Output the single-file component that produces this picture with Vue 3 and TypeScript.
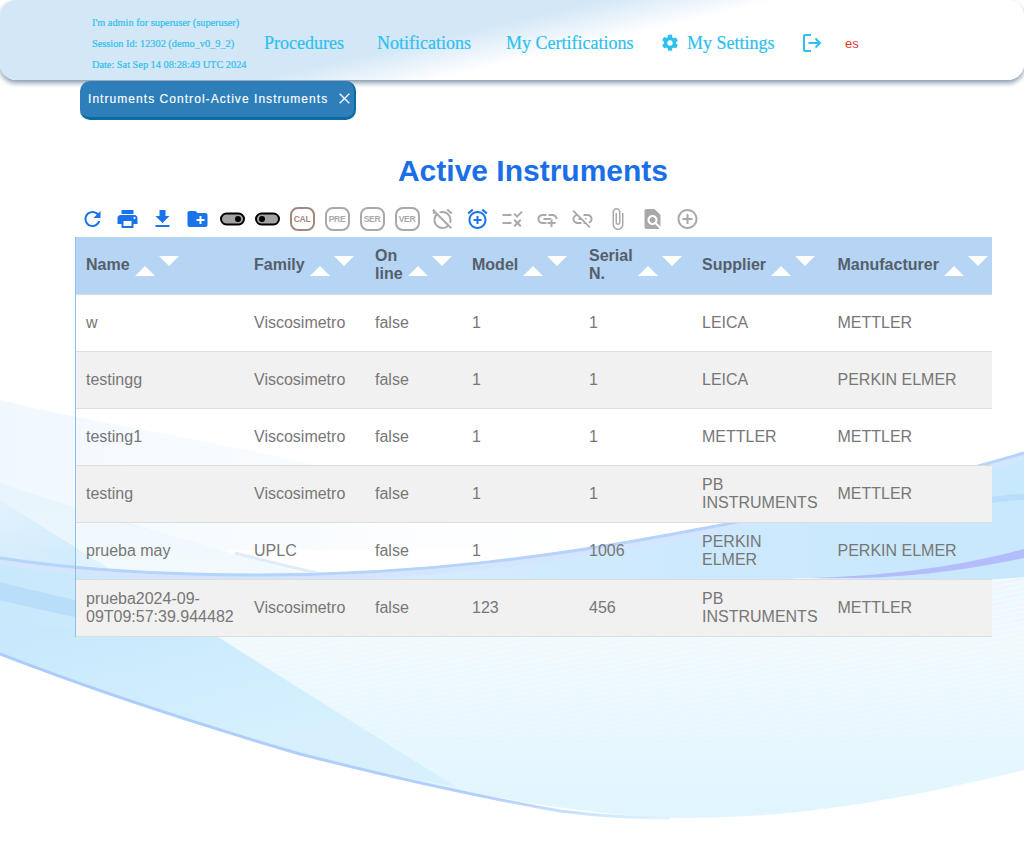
<script setup lang="ts">
interface Icon { d: string; c: string }
const ic = { blue: '#1a73e8', grey: '#a9a9a9' }
const before: Icon[] = [
  { c: ic.blue, d: 'M17.65 6.35C16.2 4.9 14.21 4 12 4c-4.42 0-7.99 3.58-7.99 8s3.57 8 7.99 8c3.73 0 6.84-2.55 7.73-6h-2.08c-.82 2.33-3.04 4-5.65 4-3.31 0-6-2.69-6-6s2.69-6 6-6c1.66 0 3.14.69 4.22 1.78L13 11h7V4l-2.35 2.35z' },
  { c: ic.blue, d: 'M19 8H5c-1.66 0-3 1.34-3 3v6h4v4h12v-4h4v-6c0-1.66-1.34-3-3-3zm-3 11H8v-5h8v5zm3-7c-.55 0-1-.45-1-1s.45-1 1-1 1 .45 1 1-.45 1-1 1zm-1-9H6v4h12V3z' },
  { c: ic.blue, d: 'M19 9h-4V3H9v6H5l7 7 7-7zM5 18v2h14v-2H5z' },
  { c: ic.blue, d: 'M20 6h-8l-2-2H4c-1.11 0-1.99.89-1.99 2L2 18c0 1.11.89 2 2 2h16c1.11 0 2-.89 2-2V8c0-1.11-.89-2-2-2zm-1 8h-3v3h-2v-3h-3v-2h3V9h2v3h3v2z' }
]
const badges = [
  { t: 'CAL', c: '#a1887f' }, { t: 'PRE', c: '#a9a9a9' }, { t: 'SER', c: '#a9a9a9' }, { t: 'VER', c: '#a9a9a9' }
]
const after: Icon[] = [
  { c: ic.grey, d: 'M10.04 6.29C10.66 6.11 11.32 6 12 6c3.86 0 7 3.14 7 7 0 .68-.11 1.34-.29 1.96l1.56 1.56c.47-1.08.73-2.27.73-3.52 0-4.97-4.03-9-9-9-1.25 0-2.44.26-3.53.72l1.57 1.57zM17.34 1.81l4.6 3.85-1.28 1.53-4.61-3.84zM3.02 2.1L1.61 3.51l1.37 1.37-.92.77 1.28 1.54 1.06-.89.8.8C3.83 8.69 3 10.75 3 13c0 4.97 4.03 9 9 9 2.25 0 4.31-.83 5.89-2.2l2.1 2.1 1.41-1.41L3.02 2.1zM12 20c-3.86 0-7-3.14-7-7 0-1.7.61-3.26 1.62-4.47l9.85 9.85C15.26 19.39 13.7 20 12 20z' },
  { c: ic.blue, d: 'M7.88 3.39L6.6 1.86 2 5.71l1.29 1.53 4.59-3.85zM22 5.72l-4.6-3.86-1.29 1.53 4.6 3.86L22 5.72zM12 4c-4.97 0-9 4.03-9 9s4.02 9 9 9c4.97 0 9-4.03 9-9s-4.03-9-9-9zm0 16c-3.87 0-7-3.13-7-7s3.13-7 7-7 7 3.13 7 7-3.13 7-7 7zm1-11h-2v3H8v2h3v3h2v-3h3v-2h-3V9z' },
  { c: ic.grey, d: 'M16.54 11L13 7.46l1.41-1.41 2.12 2.12 4.24-4.24 1.41 1.41L16.54 11zM11 7H2v2h9V7zm10 6.41L19.59 12 17 14.59 14.41 12 13 13.41 15.59 16 13 18.59 14.41 20 17 17.41 19.59 20 21 18.59 18.41 16 21 13.41zM11 15H2v2h9v-2z' },
  { c: ic.grey, d: 'M8 11h8v2H8zm12.1 1H22c0-2.76-2.24-5-5-5h-4v1.9h4c1.71 0 3.1 1.39 3.1 3.1zM3.9 12c0-1.71 1.39-3.1 3.1-3.1h4V7H7c-2.76 0-5 2.24-5 5s2.24 5 5 5h4v-1.9H7c-1.71 0-3.1-1.39-3.1-3.1zM17 12h-2v3h-3v2h3v3h2v-3h3v-2h-3z' },
  { c: ic.grey, d: 'M17 7h-4v1.9h4c1.71 0 3.1 1.39 3.1 3.1 0 1.43-.98 2.63-2.31 2.98l1.46 1.46C20.88 15.61 22 13.95 22 12c0-2.76-2.24-5-5-5zm-1 4h-2.19l2 2H16zM2 4.27l3.11 3.11C3.29 8.12 2 9.91 2 12c0 2.76 2.24 5 5 5h4v-1.9H7c-1.71 0-3.1-1.39-3.1-3.1 0-1.59 1.21-2.9 2.76-3.07L8.73 11H8v2h2.73L13 15.27V17h1.73l4.01 4L20 19.74 3.27 3 2 4.27z' },
  { c: ic.grey, d: 'M16.5 6v11.5c0 2.21-1.79 4-4 4s-4-1.79-4-4V5c0-1.38 1.12-2.5 2.5-2.5s2.5 1.12 2.5 2.5v10.5c0 .55-.45 1-1 1s-1-.45-1-1V6H10v9.5c0 1.38 1.12 2.5 2.5 2.5s2.5-1.12 2.5-2.5V5c0-2.21-1.79-4-4-4S7 2.79 7 5v12.5c0 3.04 2.46 5.5 5.5 5.5s5.5-2.46 5.5-5.5V6h-1.5z' },
  { c: ic.grey, d: 'M20 19.59V8l-6-6H6c-1.1 0-1.99.9-1.99 2L4 20c0 1.1.89 2 1.99 2H18c.45 0 .85-.15 1.19-.4l-4.43-4.43c-.8.52-1.74.83-2.76.83-2.76 0-5-2.24-5-5s2.24-5 5-5 5 2.24 5 5c0 1.02-.31 1.96-.83 2.75L20 19.59zM9 13c0 1.66 1.34 3 3 3s3-1.34 3-3-1.34-3-3-3-3 1.34-3 3z' },
  { c: ic.grey, d: 'M13 7h-2v4H7v2h4v4h2v-4h4v-2h-4V7zm-1-5C6.48 2 2 6.48 2 12s4.48 10 10 10 10-4.48 10-10S17.52 2 12 2zm0 18c-4.41 0-8-3.59-8-8s3.59-8 8-8 8 3.59 8 8-3.59 8-8 8z' }
]
const cols = ['Name', 'Family', 'On line', 'Model', 'Serial N.', 'Supplier', 'Manufacturer']
const rows = [
  ['w', 'Viscosimetro', 'false', '1', '1', 'LEICA', 'METTLER'],
  ['testingg', 'Viscosimetro', 'false', '1', '1', 'LEICA', 'PERKIN ELMER'],
  ['testing1', 'Viscosimetro', 'false', '1', '1', 'METTLER', 'METTLER'],
  ['testing', 'Viscosimetro', 'false', '1', '1', 'PB INSTRUMENTS', 'METTLER'],
  ['prueba may', 'UPLC', 'false', '1', '1006', 'PERKIN ELMER', 'PERKIN ELMER'],
  ['prueba2024-09-09T09:57:39.944482', 'Viscosimetro', 'false', '123', '456', 'PB INSTRUMENTS', 'METTLER']
]
</script>

<template>
  <div class="page">
    <svg class="wave" viewBox="0 0 1024 848" aria-hidden="true">
      <defs>
        <linearGradient id="pale" x1="0" y1="0" x2="1" y2="0">
          <stop offset="0" stop-color="#f0f8fe" />
          <stop offset="1" stop-color="#f8fcff" stop-opacity="0" />
        </linearGradient>
        <linearGradient id="main" gradientUnits="userSpaceOnUse" x1="0" y1="480" x2="0" y2="820">
          <stop offset="0" stop-color="#e8f4fd" />
          <stop offset=".5" stop-color="#eff9fe" />
          <stop offset="1" stop-color="#e0f5fe" />
        </linearGradient>
        <linearGradient id="wedge" gradientUnits="userSpaceOnUse" x1="0" y1="500" x2="80" y2="790">
          <stop offset="0" stop-color="#e3f2fd" />
          <stop offset=".4" stop-color="#c6e8fc" />
          <stop offset="1" stop-color="#d6f0fe" />
        </linearGradient>
        <linearGradient id="band" gradientUnits="userSpaceOnUse" x1="0" y1="0" x2="1024" y2="0">
          <stop offset="0" stop-color="#c8e8fc" />
          <stop offset=".3" stop-color="#d6edfd" />
          <stop offset=".7" stop-color="#cde9fd" />
          <stop offset="1" stop-color="#c8e8fd" />
        </linearGradient>
        <linearGradient id="edge" gradientUnits="userSpaceOnUse" x1="0" y1="0" x2="670" y2="0">
          <stop offset="0" stop-color="#adcbfb" />
          <stop offset=".72" stop-color="#b3cffc" />
          <stop offset="1" stop-color="#e0f5fe" />
        </linearGradient>
        <pattern id="hatch" patternUnits="userSpaceOnUse" width="40" height="5" patternTransform="rotate(-11)">
          <rect width="40" height="1.300" fill="#fff" opacity=".55" />
        </pattern>
        <linearGradient id="fadeHatch" x1="0" y1="0" x2="0" y2="1">
          <stop offset="0" stop-color="#fff" />
          <stop offset=".7" stop-color="#fff" stop-opacity=".3" />
          <stop offset="1" stop-color="#fff" stop-opacity="0" />
        </linearGradient>
        <mask id="hm" maskUnits="userSpaceOnUse" x="0" y="570" width="1024" height="260">
          <rect x="0" y="570" width="1024" height="260" fill="url(#fadeHatch)" />
        </mask>
      </defs>
      <path fill="url(#pale)" d="M0 400C100 425 250 445 420 490L640 545V550H0Z" />
      <path fill="url(#main)" d="M0 483C80 510 200 545 300 572L1024 577V770C900 800 800 818 680 818C560 815 430 785 300 755C180 720 90 690 0 655Z" />
      <path fill="url(#hatch)" mask="url(#hm)" d="M200 640L1024 577V770C900 800 800 818 680 818C560 815 430 785 300 755Z" />
      <path fill="url(#wedge)" d="M0 500L456 787C400 776 350 767 300 755C180 720 90 690 0 655Z" />
      <path fill="url(#band)" d="M0 557C70 568 150 574 260 574C420 574 560 555 700 528C800 510 930 480 1024 452V577C940 584 880 578 800 578L300 620L0 630Z" />
      <path fill="#ffffff" opacity=".35" d="M75 510L300 572L240 574C170 574 120 572 75 566Z" />
      <path fill="none" stroke="#dfecfd" stroke-width="3" d="M235 553C270 562 310 572 345 579" />
      <path fill="#b8def9" d="M0 582C30 590 60 596 75 600V617C50 612 20 605 0 600Z" />
      <path fill="none" stroke="#d3e6fd" stroke-width="8" d="M0 561C70 572 150 578 260 578C420 578 560 559 700 532C800 514 930 484 1024 456" />
      <path fill="none" stroke="#b5d3fb" stroke-width="3" d="M0 558C70 569 150 575 260 575C420 575 560 556 700 529C800 511 930 481 1024 453" />
      <path fill="#b9defb" d="M992 497C1005 495 1015 494 1024 494V500C1015 500 1005 501 992 503Z" />
      <path fill="#b3bdfb" d="M810 578C880 576 950 569 1024 549V558C950 574 880 580 810 578Z" />
      <path fill="none" stroke="url(#edge)" stroke-width="3" d="M0 654C90 689 180 719 300 754C390 777 470 795 560 811C600 816 640 818 670 818" />
    </svg>

    <header class="top">
      <div class="session">
        <span>I'm admin for superuser (superuser)</span>
        <span>Session Id: 12302 (demo_v0_9_2)</span>
        <span>Date: Sat Sep 14 08:28:49 UTC 2024</span>
      </div>
      <nav class="nav">
        <a class="n1">Procedures</a>
        <a class="n2">Notifications</a>
        <a class="n3">My Certifications</a>
        <a class="n4">
          <svg width="20" height="20" viewBox="0 0 24 24"><path fill="#2ec0ee" fill-rule="evenodd" d="M19.140 12.940c.04-.3.06-.61.06-.94s-.02-.64-.07-.94l2.030-1.580a.49.49 0 0 0 .12-.61l-1.920-3.320a.49.49 0 0 0-.59-.22l-2.390.96c-.5-.38-1.030-.7-1.620-.94l-.36-2.540A.48.48 0 0 0 13.920 2h-3.840a.48.48 0 0 0-.48.41l-.36 2.540c-.59.24-1.130.57-1.620.94l-2.390-.96a.48.48 0 0 0-.59.22L2.720 8.470a.48.48 0 0 0 .12.61l2.030 1.580c-.05.3-.07.62-.07.94s.02.64.07.94l-2.030 1.580a.49.49 0 0 0-.12.61l1.920 3.320c.12.22.37.29.59.22l2.390-.96c.5.38 1.030.7 1.620.94l.36 2.540c.05.24.24.41.48.41h3.840c.24 0 .44-.17.47-.41l.36-2.540c.59-.24 1.130-.56 1.620-.94l2.390.96c.22.08.47 0 .59-.22l1.920-3.320a.48.48 0 0 0-.12-.61l-2.010-1.580zM12 15.200a3.200 3.200 0 1 1 0-6.400 3.200 3.200 0 0 1 0 6.400z" /></svg>
          <span>My Settings</span>
        </a>
        <svg class="logout" width="20" height="20" viewBox="0 0 20 20" fill="none" stroke="#2ec0ee" stroke-width="2"><path d="M9 2H3a1 1 0 0 0-1 1v14a1 1 0 0 0 1 1h6" /><path d="M6.500 10H18M13.500 5.500 18 10l-4.500 4.500" /></svg>
        <span class="lang">es</span>
      </nav>
    </header>

    <div class="tabs">
      <div class="tab">
        <span class="tab-label">Intruments Control-Active Instruments</span>
        <svg class="close" width="11" height="11" viewBox="0 0 11 11" stroke="#fff" stroke-width="1.300"><path d="M.7.7l9.600 9.600M10.300.7.700 10.300" /></svg>
      </div>
    </div>

    <main class="main">
      <h1>Active Instruments</h1>
      <div class="bar">
        <svg v-for="(i, n) in before" :key="n" class="ico" viewBox="0 0 24 24"><path :fill="i.c" :d="i.d" /></svg>
        <svg class="ico" viewBox="0 0 25 24"><rect x="1" y="6.500" width="23" height="11" rx="5.500" fill="#a3a3a3" stroke="#000" stroke-width="2" /><circle cx="18" cy="12" r="3" fill="#000" /></svg>
        <svg class="ico" viewBox="0 0 25 24"><rect x="1" y="6.500" width="23" height="11" rx="5.500" fill="#a3a3a3" stroke="#000" stroke-width="2" /><circle cx="7" cy="12" r="3" fill="#000" /></svg>
        <span v-for="b in badges" :key="b.t" class="badge" :style="{ color: b.c, borderColor: b.c }">{{ b.t }}</span>
        <svg v-for="(i, n) in after" :key="'a' + n" class="ico" viewBox="0 0 24 24"><path :fill="i.c" :d="i.d" /></svg>
      </div>
      <table>
        <colgroup>
          <col class="c1" /><col class="c2" /><col class="c3" /><col class="c4" /><col class="c5" /><col class="c6" /><col />
        </colgroup>
        <thead>
          <tr>
            <th v-for="c in cols" :key="c">
              <div class="h"><span class="h-text">{{ c }}</span><i class="up"></i><i class="down"></i></div>
            </th>
          </tr>
        </thead>
        <tbody>
          <tr v-for="r in rows" :key="r[0]">
            <td v-for="(v, k) in r" :key="k">{{ v }}</td>
          </tr>
        </tbody>
      </table>
    </main>
  </div>
</template>

<style>
html, body { margin: 0; background: #fff; }
</style>

<style scoped>
.page { position: relative; width: 1024px; height: 848px; overflow: hidden; font-family: "Liberation Sans", Arial, sans-serif; }
.wave { position: absolute; inset: 0; width: 1024px; height: 848px; }
.top { position: relative; height: 80px; display: flex; align-items: center; padding: 8px 0 0 92px; box-sizing: border-box; border-radius: 16px; background: linear-gradient(167deg, #d3e7f7 0%, #d3e7f7 44%, #fff 57%); box-shadow: 0 3px 5px rgba(70, 100, 130, .65); color: #2ec0ee; font-family: "Liberation Serif", serif; -webkit-text-stroke: .2px #2ec0ee; }
.session { display: flex; flex-direction: column; gap: 9.500px; font-size: 10.300px; width: 172px; line-height: 11.500px; white-space: nowrap; }
.nav { display: flex; align-items: center; font-size: 18px; margin-top: -2px; }
.n1 { width: 113px; }
.n2 { width: 129px; }
.n3 { width: 154px; }
.n4 { display: flex; align-items: center; gap: 7px; width: 142px; }
.lang { color: #e53935; font: 13px "Liberation Sans", sans-serif; margin-left: 23px; -webkit-text-stroke: 0; }
.tabs { position: relative; padding: 1px 0 0 80px; display: flex; }
.tab { display: flex; align-items: center; height: 39px; width: 276px; box-sizing: border-box; padding: 0 0 1px 8px; background: #2e7eba; color: #fff; font-size: 12px; letter-spacing: 1.050px; border-radius: 10px; border-bottom: 3px solid #0a6c9f; border-right: 2px solid #0a6c9f; white-space: nowrap; -webkit-text-stroke: .15px #fff; }
.close { margin-left: 11px; }
.main { position: relative; padding-left: 75px; }
h1 { margin: 33px 0 0; width: 916px; text-align: center; color: #1a6fe8; font-size: 30px; line-height: 36px; font-weight: 700; }
.bar { display: flex; align-items: center; gap: 10px; height: 32px; margin: 14px 0 2px; padding-left: 4.500px; }
.ico { width: 25px; height: 24px; flex: none; }
.badge { box-sizing: border-box; width: 25px; height: 24px; border: 2px solid; border-radius: 8px; font-size: 8.500px; letter-spacing: -.3px; font-weight: 700; display: flex; align-items: center; justify-content: center; flex: none; }
table { width: 917px; border-collapse: separate; border-spacing: 0; table-layout: fixed; font-size: 16px; color: #777; border-left: 1px solid #90bdef; }
.c1 { width: 168px; }
.c2 { width: 121px; }
.c3 { width: 97px; }
.c4 { width: 117px; }
.c5 { width: 113px; }
.c6 { width: 135.500px; }
th { background: #b6d4f3; height: 55px; padding: 0 0 2px 10px; border-bottom: 1px solid #ddd; text-align: left; color: #555f6b; font-weight: 700; line-height: 18px; }
.h { display: flex; align-items: center; }
.h-text { width: min-content; }
.up { flex: none; margin: 13px 0 0 5px; border: solid transparent; border-width: 0 10px 10px; border-bottom-color: #fff; }
.down { flex: none; margin: -7px 0 0 4px; border: solid transparent; border-width: 10px 10px 0; border-top-color: #fff; }
td { height: 56px; padding: 0 8px 0 10px; border-bottom: 1px solid #ddd; line-height: 18px; }
tbody tr:nth-child(even) td { background: #f1f1f1; }
</style>
